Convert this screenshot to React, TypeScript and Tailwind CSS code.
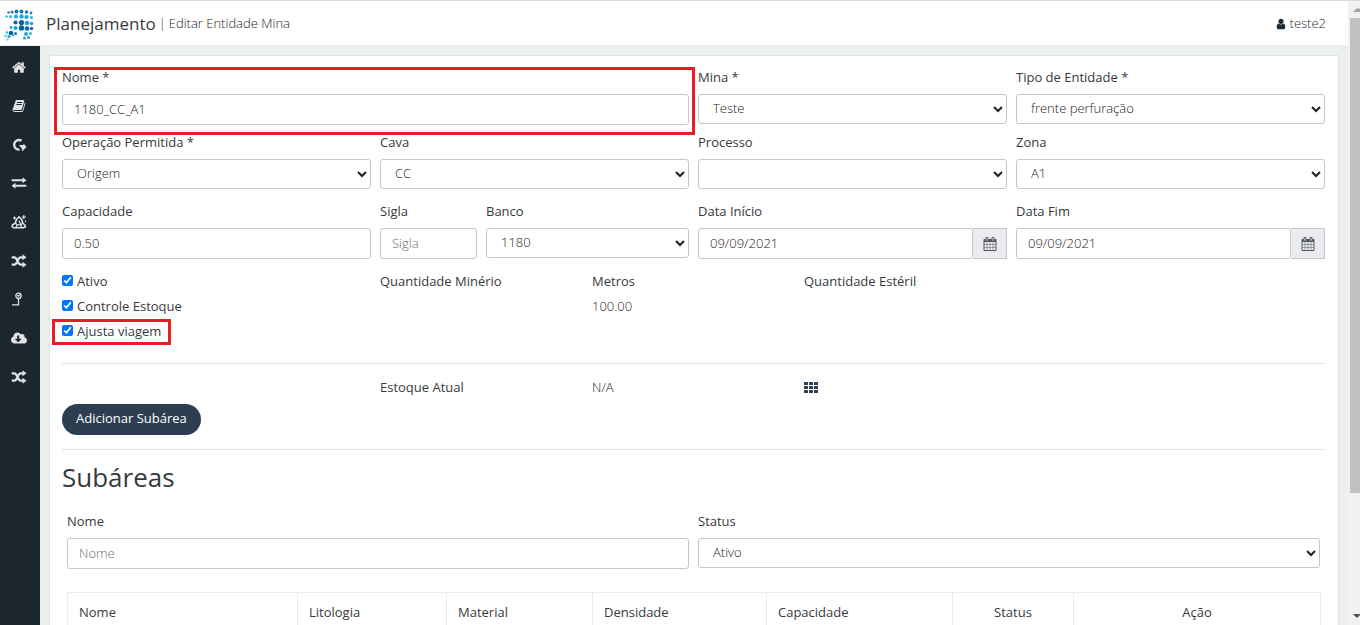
import type { ReactNode } from "react"
import { FaCloudDownloadAlt } from "react-icons/fa"

const HOME =
  "M1408 992v480q0 26-19 45t-45 19h-384v-384h-256v384h-384q-26 0-45-19t-19-45v-480q0-1 .5-3t.5-3l575-474 575 474q1 2 1 6zm223-69l-62 74q-8 9-21 11h-3q-13 0-21-7l-692-577-692 577q-12 8-24 7-13-2-21-11l-62-74q-8-10-7-23.5t11-21.5l719-599q32-26 76-26t76 26l244 204v-195q0-14 9-23t23-9h192q14 0 23 9t9 23v408l219 182q10 8 11 21.5t-7 23.5z"
const BOOK =
  "M1703 478q40 57 18 129l-275 906q-19 64-76.5 107.5t-122.5 43.5h-923q-77 0-148.5-53.5t-99.5-131.5q-24-67-2-127 0-4 3-27t4-37q1-8-3-21.5t-3-19.5q2-11 8-21t16.5-23.5 16.5-23.5q23-38 45-91.5t30-91.5q3-10 .5-30t-.5-28q3-11 17-28t17-23q21-36 42-92t25-90q1-9-2.5-32t.5-28q4-13 22-30.5t22-22.5q19-26 42.5-84.5t27.5-96.5q1-8-3-25.5t-2-26.5q2-8 9-18t18-23 17-21q8-12 16.5-30.5t15-35 16-36 19.5-32 26.5-23.5 36-11.5 47.5 5.5l-1 3q38-9 51-9h761q74 0 114 56t18 130l-274 906q-36 119-71.5 153.5t-128.5 34.5h-869q-27 0-38 15-11 16-1 43 24 70 144 70h923q29 0 56-15.5t35-41.5l300-987q7-22 5-57 38 15 59 43zm-1064 2q-4 13 2 22.5t20 9.5h608q13 0 25.5-9.5t16.5-22.5l21-64q4-13-2-22.5t-20-9.5h-608q-13 0-25.5 9.5t-16.5 22.5zm-83 256q-4 13 2 22.5t20 9.5h608q13 0 25.5-9.5t16.5-22.5l21-64q4-13-2-22.5t-20-9.5h-608q-13 0-25.5 9.5t-16.5 22.5z"
const USER =
  "M1536 1399q0 109-62.5 187t-150.5 78h-854q-88 0-150.5-78t-62.5-187q0-85 8.5-160.5t31.5-152 58.5-131 94-89 134.5-34.5q131 128 313 128t313-128q76 0 134.5 34.5t94 89 58.5 131 31.5 152 8.5 160.5zm-256-887q0 159-112.5 271.5t-271.5 112.5-271.5-112.5-112.5-271.5 112.5-271.5 271.5-112.5 271.5 112.5 112.5 271.5z"
const CALENDAR =
  "M192 1664h288v-288h-288v288zm352 0h320v-288h-320v288zm-352-352h288v-320h-288v320zm352 0h320v-320h-320v320zm-352-384h288v-288h-288v288zm736 736h320v-288h-320v288zm-384-736h320v-288h-320v288zm768 736h288v-288h-288v288zm-384-352h320v-320h-320v320zm-352-864v-288q0-13-9.5-22.5t-22.5-9.5h-64q-13 0-22.5 9.5t-9.5 22.5v288q0 13 9.5 22.5t22.5 9.5h64q13 0 22.5-9.5t9.5-22.5zm736 864h288v-320h-288v320zm-384-384h320v-288h-320v288zm384 0h288v-288h-288v288zm32-480v-288q0-13-9.5-22.5t-22.5-9.5h-64q-13 0-22.5 9.5t-9.5 22.5v288q0 13 9.5 22.5t22.5 9.5h64q13 0 22.5-9.5t9.5-22.5zm384-64v1280q0 52-38 90t-90 38h-1408q-52 0-90-38t-38-90v-1280q0-52 38-90t90-38h128v-96q0-66 47-113t113-47h64q66 0 113 47t47 113v96h384v-96q0-66 47-113t113-47h64q66 0 113 47t47 113v96h128q52 0 90 38t38 90z"

function Glyph({ d, className }: { d: string; className: string }) {
  return (
    <svg viewBox="0 0 1792 1792" className={className} fill="currentColor" aria-hidden="true">
      <path d={d} />
    </svg>
  )
}

// x, y, radius, colour
const logoDots: [number, number, number, string][] = [
  [4.5, 4.5, 1.3, "#2f7fae"], [8, 4, 1.6, "#2f7fae"], [12.5, 3.5, 1.9, "#1277ad"], [17.5, 3.5, 1.9, "#1277ad"], [22.5, 4, 1.7, "#1277ad"], [27, 5, 1.4, "#2f7fae"],
  [2.5, 8.5, 1.2, "#35b3e3"], [6.5, 8.5, 1.5, "#35b3e3"], [12, 8.5, 2, "#1ba6dd"], [17.5, 8.5, 2.2, "#1ba6dd"], [22.5, 9, 2.1, "#1ba6dd"], [27.5, 9.5, 1.6, "#35b3e3"],
  [11.5, 14.5, 2.1, "#0c6ba3"], [17.5, 14.5, 2.6, "#075f96"], [23, 15, 2.3, "#1ba6dd"], [27.5, 15.5, 1.8, "#1ba6dd"],
  [7, 19.5, 1.4, "#1ba6dd"], [11.5, 20, 2.1, "#1ba6dd"], [17.5, 20, 2.7, "#075f96"], [23, 20.5, 2.3, "#0c6ba3"], [27.5, 20.5, 1.7, "#1277ad"],
  [3, 24.5, 1.3, "#35b3e3"], [7, 25, 2.2, "#075f96"], [11.5, 25.5, 1.6, "#1277ad"], [22, 26, 1.9, "#1ba6dd"], [26.5, 25.5, 1.5, "#35b3e3"],
  [1.5, 28, 1.4, "#7fd0ee"], [5, 28.5, 1.6, "#1ba6dd"], [9, 27.5, 1, "#2f7fae"], [20.5, 30, 1.5, "#1ba6dd"], [24.5, 29.5, 1.3, "#1277ad"],
  [3.5, 31.5, 1.2, "#7fd0ee"],
]

function Logo() {
  return (
    <svg viewBox="0 0 30 33" className="w-[30px] h-[33px]" aria-hidden="true">
      {logoDots.map(([x, y, r, fill]) => (
        <circle key={`${x}-${y}`} cx={x} cy={y} r={r} fill={fill} />
      ))}
    </svg>
  )
}

function RotateIcon() {
  return (
    <svg viewBox="0 0 16 14" className="w-4 h-3.5" aria-hidden="true">
      <path d="M10.5 2.8A4.800 4.800 0 1 0 8.500 11.600" fill="none" stroke="currentColor" strokeWidth="2.400" />
      <path d="M8 7h4.500V5.500L15.500 9l-4.500 4.500V11z" fill="currentColor" />
    </svg>
  )
}

function ExchangeIcon() {
  return (
    <svg viewBox="0 0 16 12" className="w-4 h-3" fill="currentColor" aria-hidden="true">
      <path d="M.7 2.2h10.800V.200L15.400 3.200l-3.900 3v-2H.7zM15.300 7.800H4.500v-2L.6 8.800l3.900 3v-2h10.800z" />
    </svg>
  )
}

function PileIcon() {
  return (
    <svg viewBox="0 0 16 14" className="w-4 h-3.5" fill="none" stroke="currentColor" aria-hidden="true">
      <path d="M5.500 4.500 8 1.800l2.700 2.700 1 3.500 2.600 2.500v1.500l-2 .8H2.500L1 11.500l.5-1.700 2.800-1.700z" strokeWidth="1.600" />
      <path d="M4.300 8l1.900 1.800L5 12.500M6.200 9.800h3.600L8 5.500M9.800 9.800l1.900-1.600M9.800 9.800l1 2.700" strokeWidth="1.200" />
      <path d="M3.500 1.500v3M2 3h3M12.800 0v4M10.800 2h4M14.500 5.500v1.500" strokeWidth="1.200" />
    </svg>
  )
}

function RandomIcon() {
  return (
    <svg viewBox="0 0 16 14" className="w-4 h-3.5" aria-hidden="true">
      <path
        d="M.7 3.300h2.600c3.200 0 3.200 7.400 6.400 7.400h2.500M.7 10.700h2.600c3.200 0 3.200-7.400 6.400-7.400h2.500"
        fill="none"
        stroke="currentColor"
        strokeWidth="2.200"
      />
      <path d="M11.500.300 15.500 3.300l-4 3zM11.500 7.700l4 3-4 3z" fill="currentColor" />
    </svg>
  )
}

function SpotIcon() {
  return (
    <svg viewBox="0 0 16 14" className="w-4 h-3.5" fill="none" stroke="currentColor" aria-hidden="true">
      <circle cx="7.500" cy="3.800" r="2.700" strokeWidth="1.300" />
      <path d="M6.300 3l1.200 1.200L9 2.800M7.500 6.500v6.200M1 12.800h7.200" strokeWidth="1.300" />
    </svg>
  )
}

const menu: { label: string; icon: ReactNode }[] = [
  { label: "Início", icon: <Glyph d={HOME} className="size-[15px]" /> },
  { label: "Cadastros", icon: <Glyph d={BOOK} className="size-3.5" /> },
  { label: "Ciclos", icon: <RotateIcon /> },
  { label: "Movimentos", icon: <ExchangeIcon /> },
  { label: "Pilhas", icon: <PileIcon /> },
  { label: "Rotas", icon: <RandomIcon /> },
  { label: "Pontos", icon: <SpotIcon /> },
  { label: "Downloads", icon: <FaCloudDownloadAlt className="size-4" /> },
  { label: "Alocação", icon: <RandomIcon /> },
]

const control =
  "block w-full rounded-[3px] border border-[#c4c6c8] bg-white text-[13px] font-light text-[#1f2123] placeholder:text-[#6b6d6f]"

function Field({ id, label, className, children }: { id: string; label: string; className?: string; children: ReactNode }) {
  return (
    <div className={className}>
      <label htmlFor={id} className="block mb-[7px] leading-5">
        {label}
      </label>
      {children}
    </div>
  )
}

function Select({ id, value }: { id: string; value: string }) {
  return (
    <select id={id} defaultValue={value} className={`${control} h-[30px] px-2.5 pb-0.5`}>
      <option>{value}</option>
    </select>
  )
}

function Input({ id, value, placeholder }: { id: string; value?: string; placeholder?: string }) {
  return (
    <input
      id={id}
      type="text"
      defaultValue={value}
      placeholder={placeholder}
      className={`${control} h-[31px] px-[11px] pb-0.5`}
    />
  )
}

function DateInput({ id, value }: { id: string; value: string }) {
  return (
    <div className="flex">
      <Input id={id} value={value} />
      <button
        type="button"
        aria-label="Abrir calendário"
        className="flex w-[34px] shrink-0 items-center justify-center border border-l-0 border-[#c4c6c8] bg-[#ebecef] text-[#55595c]"
      >
        <Glyph d={CALENDAR} className="size-3.5" />
      </button>
    </div>
  )
}

function Check({ label, marked }: { label: string; marked?: boolean }) {
  return (
    <label className="relative flex w-fit items-center gap-1 leading-5">
      <input type="checkbox" defaultChecked className="mb-0.5 size-[11px] accent-[#0075ff]" />
      {label}
      {marked && (
        <span className="pointer-events-none absolute -top-[2px] -right-[10px] -bottom-1 -left-[10px] border-[3px] border-[#ed1c24]" />
      )}
    </label>
  )
}

export default function App() {
  return (
    <div className="flex h-screen overflow-hidden border-t border-[#d9d9de] bg-[#ecf0f1] font-['Open_Sans','Noto_Sans',sans-serif] text-[13px] font-medium text-[#373a3c]">
      <div className="flex min-w-0 flex-1 flex-col">
        <header className="flex h-[45px] shrink-0 items-center border-b border-[#ecf0f1] bg-white pt-0.5 pr-[22px] pl-1">
          <Logo />
          <h1 className="ml-3 text-[17px]">Planejamento</h1>
          <span className="ml-[3px] font-light">|</span>
          <span className="ml-[3px] font-light text-[#1f2123]">Editar Entidade Mina</span>
          <a href="#usuario" className="ml-auto flex items-center gap-[3px] font-light text-[#1d2c3a]">
            <Glyph d={USER} className="size-3" />
            teste2
          </a>
        </header>

        <div className="flex min-h-0 flex-1">
          <nav className="w-10 shrink-0 bg-[#1c262f] pt-[2px] text-[#dfe1e3]">
            <ul className="grid h-[348px] auto-rows-fr">
              {menu.map(({ label, icon }) => (
                <li key={label}>
                  <a href="#menu" aria-label={label} className="flex h-full items-center justify-center pr-[2px]">
                    {icon}
                  </a>
                </li>
              ))}
            </ul>
          </nav>

          <main className="min-w-0 flex-1 overflow-hidden px-[9px] pt-[9px]">
            <form className="min-h-full border border-[#dfe3e5] bg-white pt-[11px] pr-[13px] pb-10 pl-3">
              <div className="grid grid-cols-12 gap-x-[9px]">
                <Field id="nome" label="Nome *" className="relative col-span-6 mb-[7px]">
                  <Input id="nome" value="1180_CC_A1" />
                  <span className="pointer-events-none absolute top-0 -right-[6px] -bottom-[10px] -left-2 border-[3px] border-[#ed1c24]" />
                </Field>
                <Field id="mina" label="Mina *" className="col-span-3">
                  <Select id="mina" value="Teste" />
                </Field>
                <Field id="tipo" label="Tipo de Entidade *" className="col-span-3">
                  <Select id="tipo" value="frente perfuração" />
                </Field>

                <Field id="operacao" label="Operação Permitida *" className="col-span-3 mb-3">
                  <Select id="operacao" value="Origem" />
                </Field>
                <Field id="cava" label="Cava" className="col-span-3">
                  <Select id="cava" value="CC" />
                </Field>
                <Field id="processo" label="Processo" className="col-span-3">
                  <Select id="processo" value="" />
                </Field>
                <Field id="zona" label="Zona" className="col-span-3">
                  <Select id="zona" value="A1" />
                </Field>

                <Field id="capacidade" label="Capacidade" className="col-span-3 mb-3">
                  <Input id="capacidade" value="0.50" />
                </Field>
                <Field id="sigla" label="Sigla" className="col-span-1">
                  <Input id="sigla" placeholder="Sigla" />
                </Field>
                <Field id="banco" label="Banco" className="col-span-2">
                  <Select id="banco" value="1180" />
                </Field>
                <Field id="inicio" label="Data Início" className="col-span-3">
                  <DateInput id="inicio" value="09/09/2021" />
                </Field>
                <Field id="fim" label="Data Fim" className="col-span-3">
                  <DateInput id="fim" value="09/09/2021" />
                </Field>

                <div className="col-span-3 flex flex-col gap-[5px]">
                  <Check label="Ativo" />
                  <Check label="Controle Estoque" />
                  <Check label="Ajusta viagem" marked />
                </div>
                <p className="col-span-2 leading-5">Quantidade Minério</p>
                <div className="col-span-2 flex flex-col gap-[5px] leading-5">
                  <p>Metros</p>
                  <p className="font-light text-[#1f2123]">100.00</p>
                </div>
                <p className="col-span-3 leading-5">Quantidade Estéril</p>
              </div>

              <hr className="mt-[22px] mb-[13px] border-[#e1e3e4]" />

              <div className="grid grid-cols-12 gap-x-[9px] leading-5">
                <p className="col-span-2 col-start-4">Estoque Atual</p>
                <p className="col-span-2 font-light text-[#1f2123]">N/A</p>
                <button type="button" aria-label="Ver estoque" className="flex items-center text-[#2c3e50]">
                  <svg viewBox="0 0 14 11" className="w-3.5 h-[11px]" fill="currentColor" aria-hidden="true">
                    {[0, 4, 8].map((y) =>
                      [0, 5, 10].map((x) => <rect key={`${x}-${y}`} x={x} y={y} width="4" height="3" rx="0.5" />)
                    )}
                  </svg>
                </button>
              </div>

              <button type="button" className="mt-[7px] h-[31px] rounded-full bg-[#2c3e50] px-3.5 pb-0.5 text-white">
                Adicionar Subárea
              </button>

              <hr className="mt-3.5 mb-3 border-[#e1e3e4]" />

              <h2 className="text-[26px] leading-[30px]">Subáreas</h2>

              <div className="mt-[19px] px-[5px]">
                <div className="grid grid-cols-2 gap-x-[9px]">
                  <Field id="sub-nome" label="Nome">
                    <Input id="sub-nome" placeholder="Nome" />
                  </Field>
                  <Field id="sub-status" label="Status">
                    <Select id="sub-status" value="Ativo" />
                  </Field>
                </div>

                <table className="mt-[23px] w-full table-fixed border-collapse leading-5">
                  <thead>
                    <tr className="[&>th]:border [&>th]:border-[#e9ebec] [&>th]:px-[11px] [&>th]:py-[9px] [&>th]:font-medium">
                      <th className="w-[230px] text-left">Nome</th>
                      <th className="w-[149px] text-left">Litologia</th>
                      <th className="w-[146px] text-left">Material</th>
                      <th className="w-[174px] text-left">Densidade</th>
                      <th className="w-[186px] text-left">Capacidade</th>
                      <th className="w-[121px] text-center">Status</th>
                      <th className="w-[247px] text-center">Ação</th>
                    </tr>
                  </thead>
                </table>
              </div>
            </form>
          </main>
        </div>
      </div>

      {/* Barra de rolagem */}
      <div className="flex w-3 shrink-0 flex-col items-end overflow-hidden bg-[#f1f1f1]" aria-hidden="true">
        <svg viewBox="0 0 10 17" className="w-2.5 h-[17px] shrink-0">
          <path d="M3 11h7V7.500L6.500 7.500z" fill="#a3a3a3" />
        </svg>
        <div className="w-2.5 flex-[475] bg-[#c1c1c1]" />
        <div className="flex-[115]" />
        <svg viewBox="0 0 10 17" className="w-2.5 h-[17px] shrink-0">
          <path d="M3 6h7v1L7 10z" fill="#505050" />
        </svg>
      </div>
    </div>
  )
}
